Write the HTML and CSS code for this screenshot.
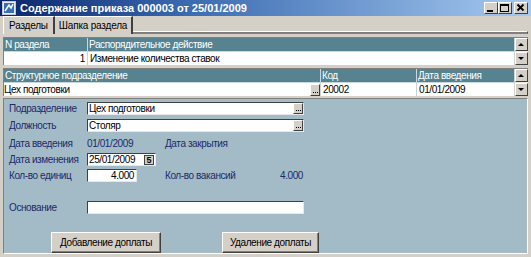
FILE: index.html
```html
<!DOCTYPE html>
<html lang="ru">
<head>
<meta charset="utf-8">
<title>Содержание приказа</title>
<link rel="stylesheet" href="styles.css">
</head>
<body>
<div class="window">
  <div class="titlebar">
    <svg class="appicon" width="14" height="14" viewBox="0 0 14 14">
      <rect x="0.5" y="0.5" width="13" height="13" fill="#e8eef8" stroke="#c0c8d8"/>
      <rect x="2" y="2" width="10" height="10" fill="#3a6fb8"/>
      <path d="M3 10 L7 4 L9 7 L11 3" stroke="#fff" stroke-width="1.5" fill="none"/>
    </svg>
    <span class="title">Содержание приказа 000003 от 25/01/2009</span>
    <div class="ctrls">
      <span class="cbtn"><svg width="12" height="10" viewBox="0 0 12 10"><rect x="2" y="7" width="6" height="2" fill="#000"/></svg></span>
      <span class="cbtn"><svg width="12" height="10" viewBox="0 0 12 10"><rect x="1.5" y="1.5" width="8" height="7" fill="none" stroke="#000"/><rect x="1" y="1" width="9" height="2" fill="#000"/></svg></span>
      <span class="cbtn close"><svg width="12" height="10" viewBox="0 0 12 10"><path d="M2.5 1.5 L8.5 7.5 M8.5 1.5 L2.5 7.5" stroke="#000" stroke-width="1.8"/></svg></span>
    </div>
  </div>

  <div class="tabs">
    <div class="tab active">Разделы</div>
    <div class="tab">Шапка раздела</div>
    <div class="tabfill"></div>
  </div>

  <div class="content">
    <div class="grid g1">
      <div class="hcell">N раздела</div>
      <div class="hcell">Распорядительное действие</div>
      <div class="sbar"><span class="arrow up"></span><span class="track"></span><span class="arrow down"></span></div>
      <div class="dcell num">1</div>
      <div class="dcell">Изменение количества ставок</div>
    </div>

    <div class="grid g2">
      <div class="hcell">Структурное подразделение</div>
      <div class="hcell">Код</div>
      <div class="hcell">Дата введения</div>
      <div class="sbar"><span class="arrow up"></span><span class="track"></span><span class="arrow down"></span></div>
      <div class="dcell withbtn"><span>Цех подготовки</span><span class="dots"><i></i><i></i><i></i></span></div>
      <div class="dcell">20002</div>
      <div class="dcell">01/01/2009</div>
    </div>

    <div class="panel">
      <div class="row r1">
        <span class="lbl">Подразделение</span>
        <span class="field wide"><span class="val">Цех подготовки</span><span class="dots"><i></i><i></i><i></i></span></span>
      </div>
      <div class="row r2">
        <span class="lbl">Должность</span>
        <span class="field wide"><span class="val">Столяр</span><span class="dots"><i></i><i></i><i></i></span></span>
      </div>
      <div class="row r3">
        <span class="lbl">Дата введения</span>
        <span class="txt w78">01/01/2009</span>
        <span class="txt">Дата закрытия</span>
      </div>
      <div class="row r4">
        <span class="lbl">Дата изменения</span>
        <span class="field date"><span class="val">25/01/2009</span><span class="cal">5</span></span>
      </div>
      <div class="row r5">
        <span class="lbl">Кол-во единиц</span>
        <span class="field qty"><span class="val right">4.000</span></span>
        <span class="txt vac">Кол-во вакансий</span>
        <span class="txt vacnum">4.000</span>
      </div>
      <div class="row r6">
        <span class="lbl">Основание</span>
        <span class="field wide"><span class="val"></span></span>
      </div>
      <div class="btnrow">
        <span class="btn b1">Добавление доплаты</span>
        <span class="btn b2">Удаление доплаты</span>
      </div>
    </div>
  </div>
</div>
</body>
</html>
```

FILE: styles.css
```css
* { box-sizing: border-box; }
html, body { margin: 0; padding: 0; }
body {
  width: 531px;
  height: 257px;
  overflow: hidden;
  background: #d4d0c8;
  font-family: "Liberation Sans", Arial, sans-serif;
  font-size: 10px;
  letter-spacing: -0.4px;
  color: #000;
}
.window {
  width: 531px;
  height: 257px;
  display: flex;
  flex-direction: column;
  background: #d4d0c8;
}
.titlebar {
  height: 18px;
  display: flex;
  align-items: center;
  padding: 0 3px 0 2px;
  background: linear-gradient(to right, #0a246a 0%, #3a6ab0 35%, #a6caf0 100%);
}
.appicon { flex: none; margin-right: 4px; }
.title {
  color: #fff;
  font-weight: bold;
  font-size: 11px;
  letter-spacing: 0;
  white-space: nowrap;
}
.ctrls { margin-left: auto; display: flex; }
.cbtn {
  width: 14px;
  height: 12px;
  background: #d4d0c8;
  border: 1px solid;
  border-color: #fff #404040 #404040 #fff;
  display: flex;
  align-items: center;
  justify-content: center;
}
.cbtn.close { margin-left: 2px; }

.tabs {
  height: 19px;
  display: flex;
  align-items: flex-end;
  padding-left: 3px;
}
.tab {
  height: 18px;
  padding: 3px 4px 0 4px;
  border-top: 1px solid #fff;
  border-right: 2px solid #404040;
  white-space: nowrap;
  letter-spacing: -0.2px;
}
.tab.active { border-left: 1px solid #fff; padding-left: 5px; padding-right: 5px; }
.tabfill {
  flex: 1;
  height: 3px;
  margin-right: 3px;
  border-top: 1px solid #fff;
  border-right: 1px solid #404040;
  border-bottom: 2px solid #808080;
}

.content {
  flex: 1;
  padding: 3px 3px 3px 3px;
  display: flex;
  flex-direction: column;
}
.grid {
  display: grid;
  grid-template-rows: 14px 13px;
  border-top: 1px solid #808080;
  border-left: 1px solid #808080;
}
.g1 { grid-template-columns: 84px 1fr 13px; }
.g2 { grid-template-columns: 317px 96px 1fr 13px; margin-top: 3px; }
.hcell {
  background: #56838f;
  color: #fff;
  padding: 1px 0 0 1px;
  border-right: 1px solid #c8d8dc;
  border-bottom: 1px solid #c8d8dc;
  white-space: nowrap;
  overflow: hidden;
}
.dcell {
  background: #fff;
  padding: 0 0 0 2px;
  border-right: 1px solid #d0d0d0;
  white-space: nowrap;
  overflow: hidden;
  line-height: 13px;
}
.dcell.num { text-align: right; padding-right: 2px; }
.withbtn { display: flex; justify-content: space-between; align-items: center; padding: 0 !important; }
.sbar {
  grid-row: 1 / 3;
  grid-column: -2;
  display: flex;
  flex-direction: column;
  background: #ece9e4;
}
.arrow {
  height: 13px;
  background: #d4d0c8;
  border: 1px solid;
  border-color: #fff #404040 #404040 #fff;
  position: relative;
}
.arrow::after {
  content: "";
  position: absolute;
  left: 2px;
  top: 4px;
  border-left: 3px solid transparent;
  border-right: 3px solid transparent;
}
.arrow.up::after { border-bottom: 3px solid #000; }
.arrow.down::after { border-top: 3px solid #000; }
.track { flex: 1; }
.dots {
  width: 10px;
  height: 12px;
  background: #d4d0c8;
  border: 1px solid;
  border-color: #fff #404040 #404040 #fff;
  flex: none;
  display: flex;
  align-items: flex-end;
  justify-content: center;
  gap: 1px;
  padding-bottom: 2px;
}
.dots i {
  display: block;
  width: 1px;
  height: 1px;
  background: #000;
}

.panel {
  flex: 1;
  margin-top: 2px;
  background: #a3bbc6;
  border: 1px solid;
  border-color: #808080 #fff #fff #808080;
  color: #1a2a6a;
  padding: 3px 0 0 5px;
  display: flex;
  flex-direction: column;
}
.row {
  display: flex;
  align-items: center;
  height: 13px;
}
.r2 { margin-top: 4px; }
.r3 { margin-top: 4px; height: 15px; }
.r4 { margin-top: 2px; }
.r5 { margin-top: 3px; }
.r6 { margin-top: 19px; }
.lbl { width: 78px; flex: none; white-space: nowrap; }
.txt { white-space: nowrap; }
.w78 { width: 78px; flex: none; }
.field {
  display: flex;
  align-items: center;
  height: 13px;
  background: #fff;
  border-top: 1px solid #404040;
  border-left: 1px solid #404040;
  border-bottom: 1px solid #e8e8e8;
  border-right: 1px solid #e8e8e8;
  color: #000;
}
.field .val { flex: 1; padding-left: 1px; white-space: nowrap; line-height: 11px; }
.field .val.right { text-align: right; padding-right: 2px; }
.wide { width: 217px; }
.field .dots { height: 11px; }
.date { width: 69px; }
.cal {
  width: 10px;
  height: 10px;
  margin-right: 1px;
  border: 1px solid #404040;
  background: #d4d0c8;
  font-size: 9px;
  line-height: 8px;
  text-align: center;
  font-weight: bold;
  letter-spacing: 0;
}
.qty { width: 50px; flex: none; }
.vac { margin-left: 28px; width: 115px; flex: none; }
.vacnum { margin-left: 0; }
.btnrow {
  display: flex;
  margin-top: 18px;
  padding-left: 42px;
}
.btn {
  height: 21px;
  background: #d4d0c8;
  border: 1px solid;
  border-color: #fff #404040 #404040 #fff;
  box-shadow: inset -1px -1px 0 #808080;
  color: #000;
  white-space: nowrap;
  display: flex;
  align-items: center;
  justify-content: center;
}
.b1 { width: 110px; }
.b2 { width: 97px; margin-left: 61px; }
```
